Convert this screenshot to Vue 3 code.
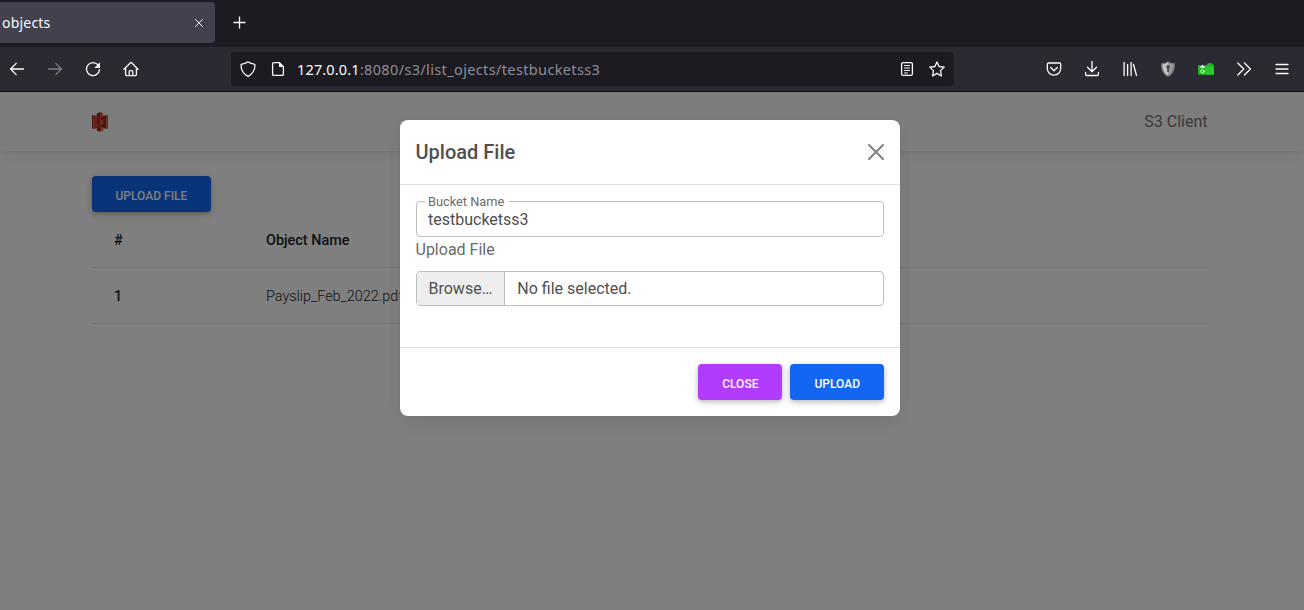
<script setup>
const rows = [{ id: 1, name: 'Payslip_Feb_2022.pdf' }]
</script>

<template>
  <div class="window">
    <div class="tabs">
      <div class="tab">
        <span class="tab-title">objects</span>
        <svg class="tab-close" width="10" height="10" viewBox="0 0 10 10"><path d="M1.2 1.2l7.6 7.6M8.8 1.2L1.2 8.8" /></svg>
      </div>
      <svg class="tab-new" width="13" height="13" viewBox="0 0 13 13"><path d="M6.500 .5v12M.5 6.500h12" /></svg>
    </div>

    <div class="toolbar">
      <div class="nav-icons">
        <span class="tool"><svg viewBox="0 0 16 16"><path d="M14.500 8H1.600M7.200 2.400L1.600 8l5.600 5.600" /></svg></span>
        <span class="tool dim"><svg viewBox="0 0 16 16"><path d="M1.500 8h12.900M8.800 2.400L14.400 8l-5.600 5.600" /></svg></span>
        <span class="tool"><svg viewBox="0 0 16 16"><path d="M13.500 4.600A6.500 6.500 0 1 0 14.500 8.600" /><path class="solid" d="M15 1.300v5.200a.5.500 0 0 1-.5.500H9.300z" /></svg></span>
        <span class="tool"><svg viewBox="0 0 16 16"><path d="M1 8.200L7.500 1.700a.8.800 0 0 1 1.100 0L15 8.200M2.600 7v6.600c0 .6.400 1 1 1h8.800c.6 0 1-.4 1-1V7M6.200 14.500v-4c0-.5.400-.9.900-.9h1.800c.5 0 .9.400.9.900v4" /></svg></span>
      </div>

      <div class="urlbar">
        <span class="url-icon"><svg viewBox="0 0 16 16"><path d="M8 .8c2 1.500 4.200 2.200 6.200 2.300.5 0 .8.400.8.900C14.800 9.300 12.400 13.300 8 15.300 3.600 13.300 1.200 9.300 1 4c0-.5.300-.9.800-.9C3.800 3 6 2.300 8 .8z" /></svg></span>
        <span class="url-icon"><svg viewBox="0 0 16 16"><path d="M9.400 1.600H3.800c-.7 0-1.200.5-1.200 1.200v10.400c0 .7.500 1.200 1.200 1.200h8.400c.7 0 1.200-.5 1.200-1.200V5.600z" /><path class="solid" d="M9 1l5 5H9.600a.6.600 0 0 1-.6-.6z" /></svg></span>
        <span class="url"><b>127.0.0.1</b>:8080/s3/list_ojects/testbucketss3</span>
        <span class="url-icon"><svg viewBox="0 0 16 16"><rect x="2.600" y="1.600" width="10.800" height="12.800" rx="1.500" /><path class="thin" d="M5.500 4.500h5M5.500 7h5M5.500 9.500h5M5.500 12h3" /></svg></span>
        <span class="url-icon"><svg viewBox="0 0 16 16"><path d="M8 .9l2.100 4.600 5.100.6-3.700 3.500.9 5.400L8 12.400 3.600 15l.9-5.400L.8 6.100l5.100-.6z" /></svg></span>
      </div>

      <div class="ext-icons">
        <span class="tool"><svg viewBox="0 0 16 16"><path d="M2.500 2h11c.7 0 1.200.5 1.200 1.200v4.300a6.700 6.700 0 0 1-13.400 0V3.200C1.300 2.500 1.800 2 2.500 2zM4.700 6.500L8 9.700l3.300-3.200" /></svg></span>
        <span class="tool"><svg viewBox="0 0 16 16"><path d="M8 .5v10M3.500 6.300L8 10.800l4.500-4.500M1.600 11.500v1.700c0 .8.500 1.300 1.300 1.300h10.200c.8 0 1.300-.5 1.300-1.300v-1.700" /></svg></span>
        <span class="tool"><svg viewBox="0 0 16 16"><path d="M2.100 1.500v13M5.600 3.500v11M9.100 1.500v13M11.500 3.500l3 11" /></svg></span>
        <span class="tool">
          <svg viewBox="0 0 16 16">
            <path class="badge-edge" d="M8 0c2 1.500 4.500 2.200 7 2.200C15 8.500 13.300 13.400 8 16 2.700 13.400 1 8.500 1 2.200 3.500 2.200 6 1.500 8 0z" />
            <path class="badge-left" d="M8 1.500v12.900C4.200 12.200 2.600 8.500 2.300 3.400 4.500 3.200 6.400 2.600 8 1.500z" />
            <path class="badge-right" d="M8 1.500v12.900c3.800-2.200 5.400-5.900 5.700-11C11.500 3.200 9.600 2.600 8 1.500z" />
            <path class="badge-key" d="M8 4a2 2 0 0 1 1 3.700V11H7.200V7.700A2 2 0 0 1 8 4z" />
          </svg>
        </span>
        <span class="tool">
          <svg viewBox="0 0 16 16">
            <path class="folder" d="M0 4.200h8.500L10 2.200h4.500l.5 1.500h1v10H0z" />
            <path class="folder-front" d="M7 6h9v7.500H7z" />
            <path class="folder-mark" d="M4.500 3.600l1.300 1.800 1.600.2-1.400 1.500H3L1.600 5.600l1.600-.2z" />
            <circle class="folder-ring" cx="4.500" cy="10.300" r="1.700" />
          </svg>
        </span>
        <span class="tool"><svg viewBox="0 0 16 16"><path d="M1.800 2l6 6-6 6M8.400 2l6 6-6 6" /></svg></span>
        <span class="tool"><svg viewBox="0 0 16 16"><path d="M2 3.500h12M2 8h12M2 12.500h12" /></svg></span>
      </div>
    </div>

    <div class="page">
      <header class="navbar">
        <svg class="logo" width="16" height="20" viewBox="0 0 16 20">
          <path class="l-dark" d="M0 3.500l1.500-.7V17L0 16.300z" />
          <path class="l-mid" d="M1.500 3L8 4.800v10.400L1.500 17z" />
          <path class="l-dark" d="M14.500 3L8 4.800v10.400l6.500 1.800z" />
          <path class="l-light" d="M14.500 3l1.500.6v12.700l-1.500.7z" />
          <path class="l-dark" d="M4.800 1.600L8 0v5.400L4.800 4.800zM4.800 18.400L8 20v-5.400l-3.200.6zM5 7.800L8 7v6l-3-.8z" />
          <path class="l-light" d="M8 0l3.200 1.600v3.200L8 5.400zM8 20l3.200-1.600v-3.200L8 14.600zM8 7l3 .8v4.400L8 13z" />
        </svg>
        <span class="brand">S3 Client</span>
      </header>

      <main class="content">
        <button class="btn primary">Upload File</button>
        <table>
          <thead>
            <tr><th class="num">#</th><th>Object Name</th></tr>
          </thead>
          <tbody>
            <tr v-for="row in rows" :key="row.id"><th>{{ row.id }}</th><td>{{ row.name }}</td></tr>
          </tbody>
        </table>
      </main>

      <div class="backdrop">
        <section class="modal">
          <div class="modal-header">
            <h5>Upload File</h5>
            <svg width="16" height="16" viewBox="0 0 16 16"><path d="M1 1l14 14M15 1L1 15" /></svg>
          </div>
          <div class="modal-body">
            <fieldset class="outline">
              <legend>Bucket Name</legend>
              <div class="value">testbucketss3</div>
            </fieldset>
            <div class="file-label">Upload File</div>
            <div class="file">
              <span class="browse">Browse…</span>
              <span class="file-name">No file selected.</span>
            </div>
          </div>
          <div class="modal-footer">
            <button class="btn secondary">Close</button>
            <button class="btn primary">Upload</button>
          </div>
        </section>
      </div>
    </div>
  </div>
</template>

<style>
body {
  overflow: hidden;
}
</style>

<style scoped>
* {
  box-sizing: border-box;
}
.window {
  width: 1304px;
  height: 610px;
  display: flex;
  flex-direction: column;
  overflow: hidden;
  font-family: Roboto, "Liberation Sans", sans-serif;
  color: #4f4f4f;
}
svg {
  display: block;
  fill: none;
}
.tabs {
  height: 47px;
  padding-top: 2px;
  display: flex;
  background: #1c1b22;
  font-family: "Noto Sans", "Open Sans", sans-serif;
}
.tab {
  width: 215px;
  height: 41px;
  padding: 0 11px 0 2px;
  display: flex;
  align-items: center;
  justify-content: space-between;
  background: #42414d;
  border-radius: 0 4px 4px 0;
  color: #fbfbfe;
  font-size: 14px;
}
.tab-title {
  line-height: 20px;
  letter-spacing: 0.2px;
}
.tab-close,
.tab-new {
  stroke: #fbfbfe;
}
.tab-new {
  margin: 14px 0 0 18px;
  stroke-width: 1.3;
}
.toolbar {
  height: 45px;
  padding-right: 3px;
  display: flex;
  align-items: center;
  background: #2b2a33;
  border-bottom: 1px solid #0c0c0d;
}
.nav-icons {
  display: flex;
  margin-left: -2px;
}
.ext-icons {
  display: flex;
  margin-left: auto;
}
.tool {
  width: 38px;
  display: flex;
  justify-content: center;
}
.tool svg,
.url-icon svg {
  width: 16px;
  height: 16px;
  stroke: #fbfbfe;
  stroke-width: 1.3;
  stroke-linecap: round;
  stroke-linejoin: round;
}
.url-icon .thin {
  stroke-width: 1;
}
.tool.dim {
  opacity: 0.4;
}
.tool .solid,
.url-icon .solid {
  fill: #fbfbfe;
  stroke: none;
}
.tool .badge-edge { fill: #77777a; stroke: none; }
.tool .badge-left { fill: #c4c4c4; stroke: none; }
.tool .badge-right { fill: #9a9a9a; stroke: none; }
.tool .badge-key { fill: #4b4b4b; stroke: none; }
.tool .folder { fill: #22b722; stroke: none; }
.tool .folder-front { fill: #2bc92b; stroke: none; }
.tool .folder-mark { fill: #f2fff2; stroke: none; }
.tool .folder-ring { stroke: #e2fbe2; stroke-width: 1; }
.urlbar {
  width: 723px;
  height: 34px;
  margin-left: 81px;
  padding: 0 2px;
  display: flex;
  align-items: center;
  background: #1c1b22;
  border-radius: 4px;
}
.url-icon {
  width: 30px;
  display: flex;
  justify-content: center;
}
.url {
  flex: 1;
  padding-left: 4px;
  white-space: nowrap;
  font: 14.5px/20px "Noto Sans", "Open Sans", sans-serif;
  letter-spacing: 0.36px;
  color: #8f8e96;
}
.url b {
  font-weight: 400;
  letter-spacing: 0.15px;
  color: #fbfbfe;
}
.page {
  flex: 1;
  position: relative;
  background: #fff;
}
.navbar {
  height: 59px;
  padding: 0 96.500px 0 92px;
  display: flex;
  align-items: center;
  justify-content: space-between;
  background: #fbfbfb;
  box-shadow: 0 4px 12px 0 rgba(0, 0, 0, 0.07), 0 2px 4px rgba(0, 0, 0, 0.05);
}
.brand {
  font-size: 16px;
  line-height: 24px;
  color: #747474;
}
.logo .l-light { fill: #e25444; }
.logo .l-mid { fill: #c94032; }
.logo .l-dark { fill: #97281e; }
.content {
  padding: 25px 96px 0 92px;
}
.btn {
  display: block;
  height: 36px;
  padding: 11px 23.500px 7px;
  border: 0;
  border-radius: 4px;
  color: #fff;
  font: 500 12px/18px Roboto, sans-serif;
  text-transform: uppercase;
  box-shadow: 0 2px 5px 0 rgba(0, 0, 0, 0.2), 0 2px 10px 0 rgba(0, 0, 0, 0.1);
}
.primary {
  background: #1266f1;
}
.secondary {
  background: #b23cfd;
}
table {
  width: 100%;
  border-collapse: separate;
  border-spacing: 0;
  table-layout: fixed;
  font-size: 14.4px;
  line-height: 23px;
  color: #212529;
}
th,
td {
  height: 56px;
  padding: 17px 22px 15px;
  text-align: left;
  border-bottom: 1px solid #e0e0e0;
}
th {
  font-weight: 500;
}
td {
  font-weight: 300;
}
.num {
  width: 152px;
}
.backdrop {
  position: absolute;
  inset: 0;
  padding-top: 28px;
  background: rgba(0, 0, 0, 0.5);
}
.modal {
  width: 500px;
  height: 296px;
  margin-left: 400px;
  display: flex;
  flex-direction: column;
  background: #fff;
  border-radius: 8px;
  box-shadow: 0 2px 15px -3px rgba(0, 0, 0, 0.07), 0 10px 20px -2px rgba(0, 0, 0, 0.04);
}
.modal-header {
  height: 65px;
  padding: 0 16px 0 15.500px;
  display: flex;
  align-items: center;
  justify-content: space-between;
  border-bottom: 1px solid #e0e0e0;
}
.modal-header svg {
  stroke: #808080;
  stroke-width: 2;
  stroke-linecap: round;
}
h5 {
  margin: 0;
  font-size: 20px;
  line-height: 32px;
  font-weight: 500;
}
.modal-body {
  flex: 1;
  padding: 16px;
}
.outline {
  height: 43px;
  min-width: 0;
  margin: -7px 0 0;
  padding: 0 11px;
  border: 1px solid #bdbdbd;
  border-radius: 4px;
}
legend {
  height: 15px;
  margin-left: -3px;
  padding: 0 5px 0 3px;
  font-size: 12.800px;
  line-height: 16px;
  color: #6b6b6b;
}
.value {
  font-size: 16px;
  line-height: 22px;
}
.file-label {
  height: 34px;
  margin-left: -0.500px;
  line-height: 25px;
  font-size: 16px;
  color: #6b6b6b;
}
.file {
  height: 35px;
  display: flex;
  border: 1px solid #bdbdbd;
  border-radius: 4px;
  overflow: hidden;
  font-size: 16px;
  line-height: 34px;
}
.browse {
  width: 88px;
  padding-left: 11.500px;
  background: #eee;
  border-right: 1px solid #bdbdbd;
}
.file-name {
  padding-left: 12.300px;
}
.modal-footer {
  height: 69px;
  padding: 16px;
  display: flex;
  justify-content: flex-end;
  gap: 8px;
  border-top: 1px solid #e0e0e0;
}
.modal-footer .btn {
  padding-left: 24px;
  padding-right: 24px;
}
</style>
